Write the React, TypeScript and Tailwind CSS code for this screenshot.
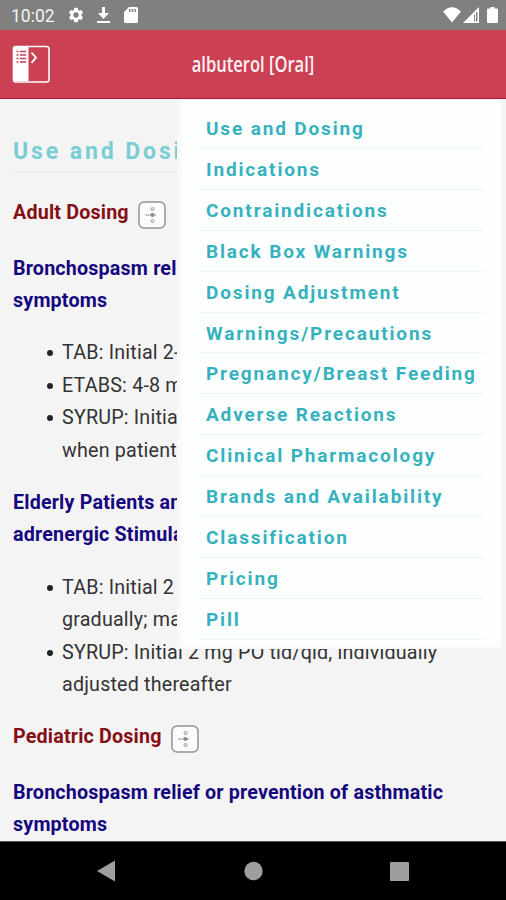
import type { ReactNode } from "react";

const menu = [
  "Use and Dosing",
  "Indications",
  "Contraindications",
  "Black Box Warnings",
  "Dosing Adjustment",
  "Warnings/Precautions",
  "Pregnancy/Breast Feeding",
  "Adverse Reactions",
  "Clinical Pharmacology",
  "Brands and Availability",
  "Classification",
  "Pricing",
  "Pill",
];

function StatusBar() {
  return (
    <div className="flex h-[30px] shrink-0 items-center bg-[#808080] pl-[11px] pr-[8px] text-white">
      <span className="w-[56px] pt-[2px] text-[17.500px] leading-[30px] text-[#f4f4f4]">10:02</span>
      <svg className="h-[18px] w-[18px]" viewBox="0 0 24 24" fill="currentColor">
        <path d="M19.14 12.94c.04-.3.06-.61.06-.94s-.02-.64-.07-.94l2.03-1.58a.49.49 0 0 0 .12-.61l-1.92-3.32a.49.49 0 0 0-.59-.22l-2.39.96a7 7 0 0 0-1.62-.94l-.36-2.54a.48.48 0 0 0-.48-.41h-3.84a.48.48 0 0 0-.47.41l-.36 2.54a7 7 0 0 0-1.62.94l-2.39-.96a.48.48 0 0 0-.59.22L2.74 8.87a.48.48 0 0 0 .12.61l2.03 1.58a6 6 0 0 0 0 1.88l-2.03 1.58a.49.49 0 0 0-.12.61l1.92 3.32c.12.22.37.29.59.22l2.39-.96c.5.38 1.03.7 1.62.94l.36 2.54c.05.24.24.41.48.41h3.84c.24 0 .44-.17.47-.41l.36-2.54a7 7 0 0 0 1.62-.94l2.39.96c.22.08.47 0 .59-.22l1.92-3.32a.48.48 0 0 0-.12-.61zM12 15.6a3.600 3.600 0 1 1 0-7.200 3.600 3.600 0 0 1 0 7.200z" />
      </svg>
      <svg className="ml-[12px] h-[16px] w-[13px]" viewBox="0 0 13 16" fill="currentColor">
        <path d="M5 0h3v6h4l-5.500 6L1 6h4zM0 14h13v2H0z" />
      </svg>
      <svg className="ml-[14px] h-[16px] w-[14px]" viewBox="0 0 14 16" fill="currentColor" fillRule="evenodd">
        <path d="M5 0h7.500Q14 0 14 1.500v13q0 1.500-1.500 1.500h-11Q0 16 0 14.500V5zM5 2v3h1.500V2zM7.700 2v3h1.500V2zM10.400 2v3h1.500V2z" />
      </svg>
      <svg className="ml-auto h-[16px] w-[18px]" viewBox="0 0 18 16" fill="currentColor">
        <path d="M0 4.500Q9-4 18 4.500L9 15.500z" />
      </svg>
      <svg className="ml-[2px] h-[16px] w-[16px]" viewBox="0 0 16 16">
        <path d="M0 16L16 0v16z" fill="#fff" />
        <path d="M11.500 7.500v7" stroke="#808080" strokeWidth="1" />
        <path d="M13.700 5v9.500" stroke="#808080" strokeWidth="1.500" />
      </svg>
      <svg className="ml-[8px] h-[16px] w-[11px]" viewBox="0 0 11 16" fill="currentColor">
        <path d="M3.500 0h4v1.500H10q1 0 1 1V15q0 1-1 1H1q-1 0-1-1V2.500q0-1 1-1h2.500z" />
      </svg>
    </div>
  );
}

function Header() {
  return (
    <header className="relative flex h-[69px] shrink-0 items-center border-b border-[#b21c3c] bg-[#cb4053] pl-[12px]">
      <svg className="h-[38px] w-[38px]" viewBox="0 0 38 38" fill="none">
        <rect x="1.500" y="1.500" width="35.500" height="35.500" rx="2.500" stroke="#fff" strokeWidth="1.600" />
        <path d="M1.500 2h15v34h-15z" fill="#fff" />
        <path d="M4.500 6.500h2M4.500 10h2M4.500 13.500h2M4.500 17h2M8 6.500h6M8 10h6M8 13.500h6M8 17h6" stroke="#cb4053" strokeWidth="1.300" />
        <path d="M19.500 7.500l4.500 5.200-4.500 5.200" stroke="#fff" strokeWidth="1.800" />
      </svg>
      <h1 className="absolute inset-x-0 top-[19px] origin-center scale-x-[0.77] text-center font-['Open_Sans','Noto_Sans',sans-serif] text-[21.500px] leading-[30px] font-semibold text-[#fff4f5]">
        albuterol [Oral]
      </h1>
    </header>
  );
}

function CalcIcon() {
  return (
    <svg className="ml-[9.500px] h-[28px] w-[28px] translate-y-[2px]" viewBox="0 0 28 28">
      <rect x="1" y="1" width="26" height="26" rx="5" fill="#fcfcfc" stroke="#929292" strokeWidth="1.500" />
      <path d="M7.500 14h11" stroke="#999" strokeWidth="1.300" strokeDasharray="1.500 0.700" />
      <circle cx="14.500" cy="14" r="2" fill="#8a8a8a" />
      <circle cx="14.500" cy="8" r="1.600" fill="#ddd" stroke="#aaa" />
      <circle cx="14.500" cy="20" r="1.600" fill="#ddd" stroke="#aaa" />
    </svg>
  );
}

function Section({ children }: { children: ReactNode }) {
  return (
    <h3 className="flex h-[32px] items-center text-[19.700px] leading-[32px] font-bold tracking-[0.180px] whitespace-nowrap text-[#850f14]">
      {children}
      <CalcIcon />
    </h3>
  );
}

function Topic({ children }: { children: ReactNode }) {
  return (
    <h4 className="text-[19.700px] leading-[32.400px] font-bold tracking-[0.180px] whitespace-nowrap text-[#15087e]">
      {children}
    </h4>
  );
}

function Item({ children }: { children: ReactNode }) {
  return (
    <li className="flex">
      <span className="mt-[13px] mr-[9px] h-[6px] w-[6px] shrink-0 rounded-full bg-[#222]" />
      <span>{children}</span>
    </li>
  );
}

function List({ children }: { children: ReactNode }) {
  return (
    <ul className="my-[20px] pl-[34px] text-[19.700px] leading-[32.400px] tracking-[0.190px] whitespace-nowrap text-[#333]">
      {children}
    </ul>
  );
}

export default function App() {
  return (
    <div className="relative flex h-[900px] w-[506px] flex-col overflow-hidden bg-[#f4f4f4] font-[Roboto,sans-serif]">
      <StatusBar />
      <Header />
      <main className="h-[742px] shrink-0 overflow-hidden px-[13px] pt-[35px]">
        <h2 className="h-[39px] border-b-2 border-[#e8eff0] text-[23px] leading-[36px] font-bold tracking-[2.900px] whitespace-nowrap text-[#7acdd3]">
          Use and Dosing
        </h2>
        <div className="mt-[24px] mb-[23.500px]">
          <Section>Adult Dosing</Section>
        </div>
        <Topic>Bronchospasm relief<br />symptoms</Topic>
        <List>
          <Item>TAB: Initial 2-4</Item>
          <Item>ETABS: 4-8 mg</Item>
          <Item>SYRUP: Initial<br />when patient</Item>
        </List>
        <Topic>Elderly Patients and<br />adrenergic Stimulat</Topic>
        <List>
          <Item>TAB: Initial 2<br />gradually; max</Item>
          <Item>SYRUP: Initial 2 mg PO tid/qid, individually<br />adjusted thereafter</Item>
        </List>
        <div className="mb-[23.500px]">
          <Section>Pediatric Dosing</Section>
        </div>
        <Topic>Bronchospasm relief or prevention of asthmatic<br />symptoms</Topic>
      </main>
      <nav className="flex h-[59px] shrink-0 items-center border-t border-[#555] bg-black text-[#9e9e9e]">
        <svg className="h-[58px] w-[506px]" viewBox="0 0 506 58" fill="currentColor">
          <path d="M97 29l18-10.500v21z" />
          <circle cx="253.500" cy="29" r="9.200" />
          <rect x="390" y="20" width="19" height="19" rx="1" />
        </svg>
      </nav>
      <aside className="absolute top-[100px] left-[177px] h-[549px] w-[325px] border-r-2 border-b-4 border-l-[5px] border-[#fafafa] bg-[#fdfefe] pt-[8px] pr-[16px] pl-[18px]">
        {menu.map((m) => (
          <div
            key={m}
            className="h-[40.920px] border-b border-[#ebf4f5] pl-[6px] text-[19px] leading-[41px] font-bold tracking-[1.850px] whitespace-nowrap text-[#36b2bf]"
          >
            {m}
          </div>
        ))}
      </aside>
    </div>
  );
}
